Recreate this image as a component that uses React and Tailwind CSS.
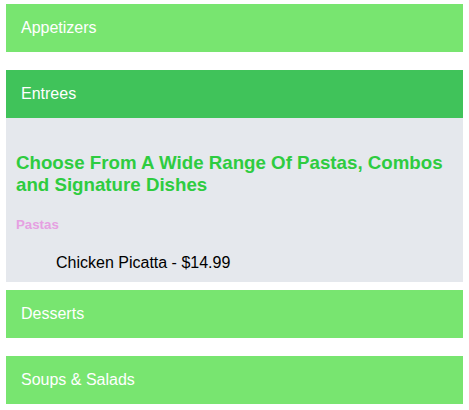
import React from "react";

const font = { fontFamily: '"Liberation Sans", Arial, Helvetica, sans-serif' };

function Header({ children, active }) {
  return (
    <div
      className={`h-12 flex items-center pl-[15px] text-white text-[16px] leading-[18px] ${
        active ? "bg-[#40c35a]" : "bg-[#78e570]"
      }`}
    >
      {children}
    </div>
  );
}

export default function App() {
  return (
    <div className="w-[469px] h-[410px] bg-white px-[6px] pt-[4px]" style={font}>
      <Header>Appetizers</Header>
      <div className="mt-[18px]">
        <Header active>Entrees</Header>
        <div className="bg-[#e5e8ed] px-[10px] pt-[33.5px] pb-[10.5px]">
          <h3 className="text-[18.72px] leading-[22px] font-bold text-[#2ecc40]">
            Choose From A Wide Range Of Pastas, Combos and Signature Dishes
          </h3>
          <h5 className="mt-[21.5px] text-[13.28px] leading-[15px] font-bold text-[#e6a0e2]">
            Pastas
          </h5>
          <div className="mt-[21.5px] pl-[40px] text-[16px] leading-[18px] text-black">
            Chicken Picatta - $14.99
          </div>
        </div>
      </div>
      <div className="mt-[8px]">
        <Header>Desserts</Header>
      </div>
      <div className="mt-[18px]">
        <Header>Soups &amp; Salads</Header>
      </div>
    </div>
  );
}
